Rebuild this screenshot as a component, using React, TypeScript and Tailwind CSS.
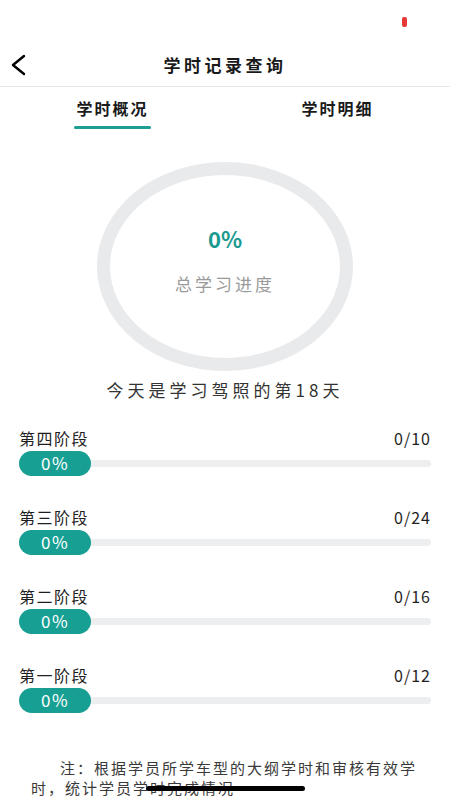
const stages = [
  { name: "第四阶段", done: 0, total: 10 },
  { name: "第三阶段", done: 0, total: 24 },
  { name: "第二阶段", done: 0, total: 16 },
  { name: "第一阶段", done: 0, total: 12 },
];

const font = { fontFamily: '"Noto Sans CJK SC", "Noto Sans", sans-serif' };

function StageRow({ name, done, total }: { name: string; done: number; total: number }) {
  return (
    <div className="mb-[30px]">
      <div className="flex justify-between items-center h-[22px] text-[16px] text-[#1f1f1f] tracking-[1.5px]">
        <span>{name}</span>
        <span className="tracking-[1px]">
          {done}/{total}
        </span>
      </div>
      <div className="mt-[2px] flex items-center">
        <div className="h-[25px] w-[72px] rounded-full bg-[#189f93] flex items-center justify-center text-white text-[17px] tracking-[1.5px] z-10">
          0%
        </div>
        <div className="flex-1 h-[7px] -ml-[4px] rounded-full bg-[#eceef0]" />
      </div>
    </div>
  );
}

export default function App() {
  return (
    <div className="relative w-[450px] h-[800px] overflow-hidden bg-white" style={font}>
      {/* status bar */}
      <div className="h-[44px] flex justify-end pr-[43px] pt-[17px]">
        <span className="w-[5px] h-[10px] rounded-[2px] bg-[#e53935]" />
      </div>

      {/* nav */}
      <div className="relative h-[43px] flex items-center justify-center border-b border-[#e8e8e8]">
        <svg className="absolute left-[10px] top-[10px]" width="18" height="22" viewBox="0 0 18 22" fill="none">
          <polyline points="14,2 3,11 14,20" stroke="#000" strokeWidth="2.4" strokeLinecap="round" strokeLinejoin="round" />
        </svg>
        <h1 className="text-[17px] font-semibold text-[#1a1a1a] tracking-[3.5px]">学时记录查询</h1>
      </div>

      {/* tabs */}
      <div className="flex h-[44px]">
        <div className="flex-1 flex flex-col items-center pt-[9px]">
          <span className="text-[16px] font-semibold text-[#1a1a1a] tracking-[2px]">学时概况</span>
          <span className="mt-[6px] h-[3px] w-[77px] bg-[#1e9e92] rounded-sm" />
        </div>
        <div className="flex-1 flex flex-col items-center pt-[9px]">
          <span className="text-[16px] font-semibold text-[#1a1a1a] tracking-[2px]">学时明细</span>
        </div>
      </div>

      {/* total progress */}
      <div className="flex flex-col items-center mt-[31px]">
        <div className="w-[256px] h-[209px] rounded-[50%] border-[13px] border-[#e9eaec] flex flex-col items-center justify-center">
          <span className="text-[22px] font-bold text-[#1a9a8f] leading-none -mt-[9px]">0%</span>
          <span className="mt-[22px] text-[17px] text-[#9a9a9a] tracking-[3px]">总学习进度</span>
        </div>
        <p className="mt-[6px] text-[17px] text-[#333] tracking-[4px]">今天是学习驾照的第18天</p>
      </div>

      {/* stages */}
      <div className="px-[19px] mt-[24px]">
        {stages.map((s) => (
          <StageRow key={s.name} {...s} />
        ))}
      </div>

      {/* note */}
      <p className="absolute left-[31px] right-[31px] top-[758px] text-[15px] leading-[20px] text-[#3a3a3a] tracking-[2px] indent-[29px]">
        注：根据学员所学车型的大纲学时和审核有效学时，统计学员学时完成情况
      </p>

      {/* home indicator */}
      <div className="absolute bottom-[9px] left-[146px] w-[159px] h-[5px] rounded-full bg-black" />
    </div>
  );
}
